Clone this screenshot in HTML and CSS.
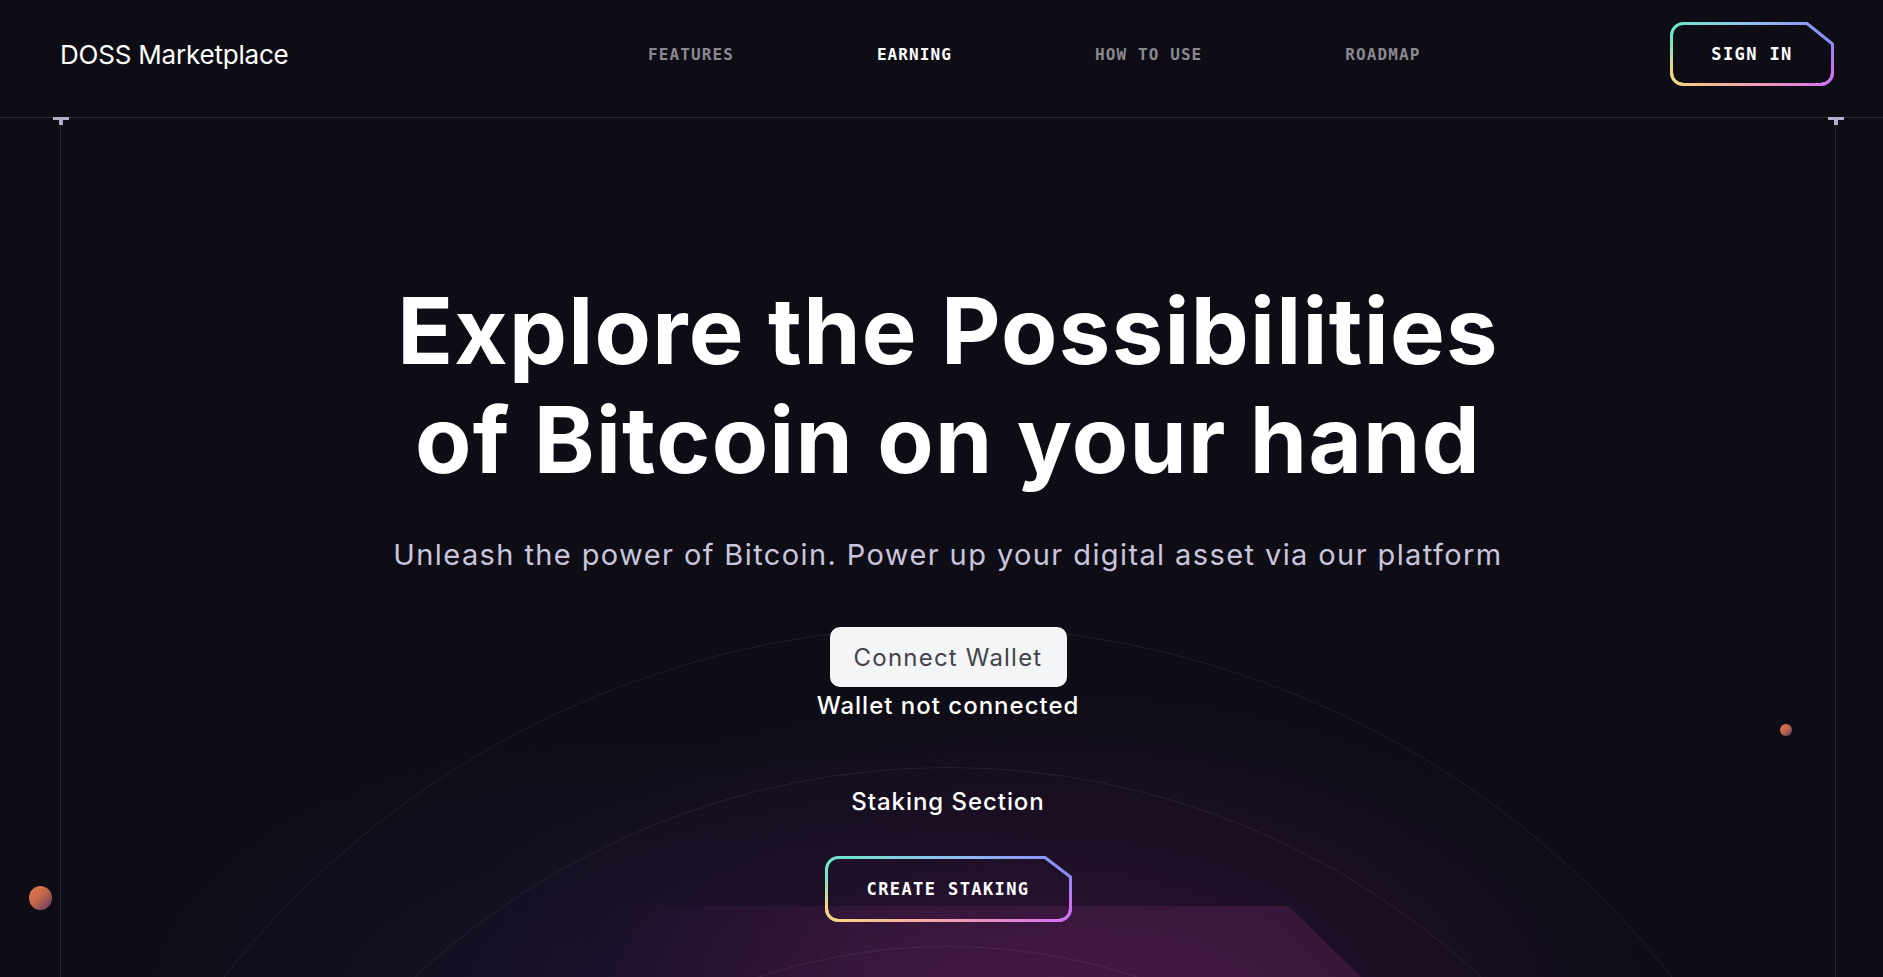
FILE: index.html
```html
<!DOCTYPE html>
<html lang="en">
<head>
<meta charset="utf-8">
<title>DOSS Marketplace</title>
<link rel="stylesheet" href="styles.css">
</head>
<body>
<header class="topbar">
  <div class="brand">DOSS Marketplace</div>
  <nav class="nav">
    <a class="nav-link">FEATURES</a>
    <a class="nav-link active">EARNING</a>
    <a class="nav-link">HOW TO USE</a>
    <a class="nav-link">ROADMAP</a>
  </nav>
  <a class="cut-btn sign-in">
    <svg class="cut-frame" width="164" height="64" viewBox="0 0 164 64">
      <defs>
        <linearGradient id="sa" x1="0" y1="0" x2="1" y2="0">
          <stop offset="0" stop-color="#6ee8c8"/>
          <stop offset="0.5" stop-color="#8fc0f0"/>
          <stop offset="1" stop-color="#8a8af6"/>
        </linearGradient>
        <linearGradient id="sb" x1="0" y1="0" x2="1" y2="0">
          <stop offset="0" stop-color="#fbd47a"/>
          <stop offset="0.5" stop-color="#f0a0ae"/>
          <stop offset="1" stop-color="#d46ef6"/>
        </linearGradient>
        <linearGradient id="sv" x1="0" y1="0" x2="0" y2="1">
          <stop offset="0.3" stop-color="#000"/>
          <stop offset="0.75" stop-color="#fff"/>
        </linearGradient>
        <mask id="sm"><rect width="164" height="64" fill="url(#sv)"/></mask>
      </defs>
      <path d="M13.5 1.5 H137 L162.5 22 V50.5 A12 12 0 0 1 150.5 62.5 H13.5 A12 12 0 0 1 1.5 50.5 V13.5 A12 12 0 0 1 13.5 1.5 Z" fill="none" stroke="url(#sa)" stroke-width="3" stroke-linejoin="round"/>
      <path d="M13.5 1.5 H137 L162.5 22 V50.5 A12 12 0 0 1 150.5 62.5 H13.5 A12 12 0 0 1 1.5 50.5 V13.5 A12 12 0 0 1 13.5 1.5 Z" fill="none" stroke="url(#sb)" stroke-width="3" stroke-linejoin="round" mask="url(#sm)"/>
    </svg>
    <span class="cut-label">SIGN IN</span>
  </a>
</header>

<main class="frame">
  <span class="mark mark-left"></span>
  <span class="mark mark-right"></span>
  <div class="backdrop">
    <div class="glow"></div>
    <div class="floor"></div>
    <div class="ring ring-1"></div>
    <div class="ring ring-2"></div>
    <div class="ring ring-3"></div>
  </div>

  <section class="hero">
    <h1 class="headline">Explore the Possibilities<br>of Bitcoin on your hand</h1>
    <p class="lead">Unleash the power of Bitcoin. Power up your digital asset via our platform</p>
    <button class="connect">Connect Wallet</button>
    <p class="status">Wallet not connected</p>
    <h2 class="staking-title">Staking Section</h2>
    <a class="cut-btn create">
      <svg class="cut-frame" width="247" height="66" viewBox="0 0 247 66">
        <defs>
          <linearGradient id="ca" x1="0" y1="0" x2="1" y2="0">
            <stop offset="0" stop-color="#6ee8c8"/>
            <stop offset="0.5" stop-color="#8fc0f0"/>
            <stop offset="1" stop-color="#8a8af6"/>
          </linearGradient>
          <linearGradient id="cb" x1="0" y1="0" x2="1" y2="0">
            <stop offset="0" stop-color="#fbd47a"/>
            <stop offset="0.5" stop-color="#f0a0ae"/>
            <stop offset="1" stop-color="#d46ef6"/>
          </linearGradient>
          <linearGradient id="cv" x1="0" y1="0" x2="0" y2="1">
            <stop offset="0.3" stop-color="#000"/>
            <stop offset="0.75" stop-color="#fff"/>
          </linearGradient>
          <mask id="cm"><rect width="247" height="66" fill="url(#cv)"/></mask>
        </defs>
        <path d="M13.5 1.5 H220 L245.5 21 V52.5 A12 12 0 0 1 233.5 64.5 H13.5 A12 12 0 0 1 1.5 52.5 V13.5 A12 12 0 0 1 13.5 1.5 Z" fill="none" stroke="url(#ca)" stroke-width="3" stroke-linejoin="round"/>
        <path d="M13.5 1.5 H220 L245.5 21 V52.5 A12 12 0 0 1 233.5 64.5 H13.5 A12 12 0 0 1 1.5 52.5 V13.5 A12 12 0 0 1 13.5 1.5 Z" fill="none" stroke="url(#cb)" stroke-width="3" stroke-linejoin="round" mask="url(#cm)"/>
      </svg>
      <span class="cut-label">CREATE STAKING</span>
    </a>
  </section>
</main>

<span class="planet planet-left"></span>
<span class="planet planet-right"></span>
</body>
</html>
```

FILE: styles.css
```css
* { box-sizing: border-box; }

html, body {
  margin: 0;
  height: 977px;
  overflow: hidden;
}

body {
  background: #0e0d16;
  color: #fff;
  font-family: Inter, "Noto Sans", sans-serif;
  position: relative;
}

/* ---------- header ---------- */
.topbar {
  height: 118px;
  display: flex;
  align-items: flex-start;
  padding: 22px 49px 0 60px;
  border-bottom: 1px solid #2a2837;
}

.brand {
  width: 588px;
  height: 64px;
  display: flex;
  align-items: center;
  font-size: 26px;
  font-weight: 400;
  letter-spacing: -0.2px;
  color: #fff;
}

.nav {
  display: flex;
  gap: 143px;
  height: 64px;
  align-items: center;
}

.nav-link {
  font-family: "DejaVu Sans Mono", monospace;
  font-weight: 700;
  font-size: 16px;
  letter-spacing: 1.1px;
  color: #8a8990;
}

.nav-link.active { color: #fff; }

.cut-btn {
  position: relative;
  display: flex;
  align-items: center;
  justify-content: center;
  font-family: "DejaVu Sans Mono", monospace;
  font-weight: 700;
  font-size: 17px;
  letter-spacing: 1.4px;
  color: #fff;
}

.cut-frame {
  position: absolute;
  left: 0;
  top: 0;
}

.cut-label { position: relative; }

.sign-in {
  margin-left: auto;
  width: 164px;
  height: 64px;
}

/* ---------- frame ---------- */
.frame {
  position: relative;
  margin: 0 47px 0 60px;
  height: 859px;
  border-left: 1px solid #2a2937;
  border-right: 1px solid #2a2937;
}

.mark {
  position: absolute;
  top: -1px;
  width: 16px;
  height: 9px;
  z-index: 3;
}

.mark::before {
  content: "";
  position: absolute;
  left: 0;
  top: 0;
  width: 16px;
  height: 3px;
  background: #b3afca;
}

.mark::after {
  content: "";
  position: absolute;
  left: 6px;
  top: 3px;
  width: 4px;
  height: 5px;
  background: #b3afca;
}

.mark-left { left: -8px; }
.mark-right { right: -9px; }

.backdrop {
  position: absolute;
  inset: 0;
  overflow: hidden;
  z-index: 0;
}

.glow {
  position: absolute;
  inset: 0;
  background:
    radial-gradient(ellipse 620px 340px at 980px 910px, rgba(72, 24, 70, 0.8), rgba(50, 18, 58, 0.45) 50%, rgba(30, 14, 40, 0) 100%),
    radial-gradient(ellipse 520px 300px at 560px 900px, rgba(28, 22, 62, 0.45), rgba(20, 16, 40, 0) 100%);
}

.floor {
  position: absolute;
  left: 0;
  top: 788px;
  width: 100%;
  height: 71px;
  clip-path: polygon(560px 0, 1227px 0, 1300px 71px, 480px 71px);
  background: linear-gradient(90deg, rgba(80, 30, 80, 0) 540px, rgba(90, 32, 88, 0.3) 800px, rgba(96, 34, 92, 0.4) 1200px);
}

.ring {
  position: absolute;
  border-radius: 50%;
  border: 1px solid rgba(255, 255, 255, 0.07);
}

.ring-1 { left: calc(887px - 924px); top: calc(1432px - 924px); width: 1848px; height: 1848px; }
.ring-2 { left: calc(887px - 783px); top: calc(1432px - 783px); width: 1566px; height: 1566px; }
.ring-3 { left: calc(887px - 604px); top: calc(1432px - 604px); width: 1208px; height: 1208px; }

/* ---------- hero ---------- */
.hero {
  position: relative;
  z-index: 1;
  display: flex;
  flex-direction: column;
  align-items: center;
  text-align: center;
  padding-top: 158px;
}

.headline {
  margin: 0;
  font-size: 92px;
  line-height: 109px;
  font-weight: 700;
  letter-spacing: 1.3px;
  color: #fff;
}

.lead {
  margin: 44px 0 0;
  font-size: 29px;
  line-height: 34px;
  font-weight: 400;
  letter-spacing: 1.4px;
  color: #c9c5dc;
}

.connect {
  margin-top: 55px;
  width: 237px;
  height: 60px;
  border: 0;
  border-radius: 10px;
  background: #f4f5f7;
  color: #444448;
  font-family: Inter, "Noto Sans", sans-serif;
  font-size: 24px;
  font-weight: 400;
  letter-spacing: 1.2px;
}

.status {
  margin: 5px 0 0;
  font-size: 24px;
  line-height: 28px;
  font-weight: 500;
  letter-spacing: 1px;
  color: #fff;
}

.staking-title {
  margin: 67px 0 0;
  font-size: 24px;
  line-height: 29px;
  font-weight: 500;
  letter-spacing: 0.95px;
  color: #fff;
}

.create {
  margin-top: 40px;
  width: 247px;
  height: 66px;
}

/* ---------- planets ---------- */
.planet {
  position: absolute;
  border-radius: 50%;
  background: linear-gradient(135deg, #e27e52 0%, #c7674a 45%, #5a3a68 100%);
}

.planet-left { left: 29px; top: 886px; width: 23px; height: 24px; }
.planet-right { left: 1780px; top: 724px; width: 12px; height: 12px; }
```
